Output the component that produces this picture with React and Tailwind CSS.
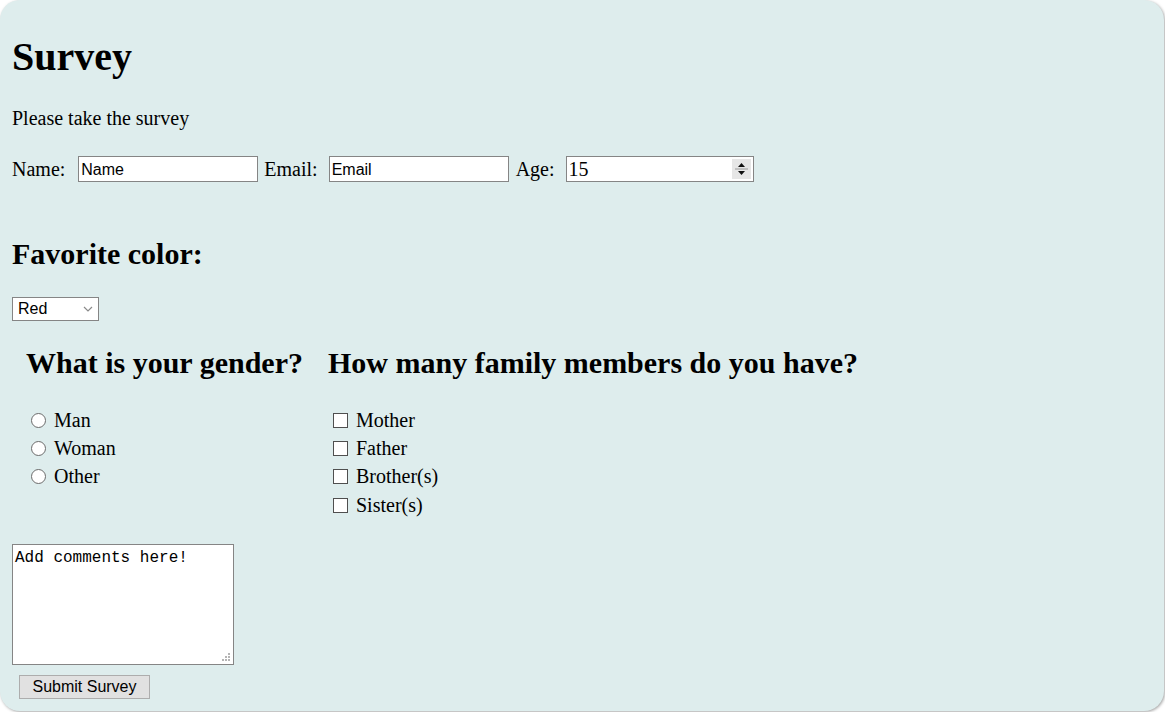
import React from "react";

const serif = "font-['Liberation_Serif','Times_New_Roman',serif]";
const sans = "font-['Liberation_Sans',Arial,sans-serif]";

const Radio = ({ label }) => (
    <div className="flex items-center h-[28.33px]">
        <span className="ml-[5px] w-[15px] h-[15px] rounded-full border-[1.5px] border-[#6b6b6b] bg-white" />
        <span className="ml-[8px]">{label}</span>
    </div>
);

const Check = ({ label }) => (
    <div className="flex items-center h-[28.33px]">
        <span className="ml-[5px] w-[15px] h-[15px] border-[1.5px] border-[#4f4f4f] bg-white" />
        <span className="ml-[8px]">{label}</span>
    </div>
);

const TextBox = ({ value, className = "" }) => (
    <input
        defaultValue={value}
        className={`h-[26px] border border-[#858585] bg-white px-[2px] pt-[2px] text-[16px] text-black outline-none ${sans} ${className}`}
    />
);

export default function App() {
    return (
        <div className="w-[1165px] h-[712px] bg-white overflow-hidden">
            <div className={`w-[1164px] h-[711px] rounded-[20px] bg-[#deeded] shadow-[1px_1px_3px_rgba(0,0,0,0.35)] pl-[12px] text-black ${serif}`}>
                <h1 className="pt-[34px] text-[40px] leading-[46px] font-bold">Survey</h1>
                <p className="mt-[27px] text-[20px] leading-[23px]">Please take the survey</p>

                <div className="mt-[26px] h-[26px] flex items-center text-[20px] leading-[23px]">
                    <span>Name:</span>
                    <TextBox value="Name" className="ml-[13px] w-[180px]" />
                    <span className="ml-[6px]">Email:</span>
                    <TextBox value="Email" className="ml-[11px] w-[180px]" />
                    <span className="ml-[7px]">Age:</span>
                    <div className="ml-[11px] w-[188px] h-[26px] border border-[#858585] bg-white flex items-center justify-between pl-[2px] pr-[2px]">
                        <span className="text-[20px] leading-[23px]">15</span>
                        <div className="w-[19px] h-[20px] bg-[#e6e6e6] flex flex-col items-center justify-center">
                            <svg width="19" height="20" viewBox="0 0 19 20">
                                <polygon points="6,8 13,8 9.5,4" fill="#111" />
                                <line x1="3" y1="10" x2="16" y2="10" stroke="#9a9a9a" strokeWidth="1" />
                                <polygon points="6,12 13,12 9.5,16" fill="#111" />
                            </svg>
                        </div>
                    </div>
                </div>

                <h2 className="mt-[55px] text-[30px] leading-[34px] font-bold">Favorite color:</h2>

                <div className={`mt-[26px] w-[87px] h-[24px] border border-[#858585] bg-white flex items-center justify-between pl-[5px] pr-[5px] text-[16px] ${sans}`}>
                    <span>Red</span>
                    <svg width="10" height="6" viewBox="0 0 10 6" fill="none">
                        <path d="M1 1 L5 5 L9 1" stroke="#8a8a8a" strokeWidth="1.2" />
                    </svg>
                </div>

                <div className="mt-[25px] flex text-[20px] leading-[23px]">
                    <div className="w-[302px] pl-[14px]">
                        <h2 className="text-[30px] leading-[34px] font-bold whitespace-nowrap">What is your gender?</h2>
                        <div className="mt-[26px]">
                            <Radio label="Man" />
                            <Radio label="Woman" />
                            <Radio label="Other" />
                        </div>
                    </div>
                    <div className="pl-[14px]">
                        <h2 className="text-[30px] leading-[34px] font-bold whitespace-nowrap">How many family members do you have?</h2>
                        <div className="mt-[26px]">
                            <Check label="Mother" />
                            <Check label="Father" />
                            <Check label="Brother(s)" />
                            <Check label="Sister(s)" />
                        </div>
                    </div>
                </div>

                <div className="relative mt-[25px] w-[222px] h-[121px]">
                    <textarea
                        defaultValue="Add comments here!"
                        className="block w-[222px] h-[121px] resize-none border border-[#858585] bg-white p-[2px] pt-[4px] text-[16px] leading-[19px] text-black outline-none font-['Liberation_Mono','Courier_New',monospace]"
                    />
                    <svg className="absolute right-[3px] bottom-[3px]" width="10" height="10" viewBox="0 0 10 10">
                        <rect x="7" y="1" width="2" height="2" fill="#b5b5b5" />
                        <rect x="4" y="4" width="2" height="2" fill="#b5b5b5" />
                        <rect x="7" y="4" width="2" height="2" fill="#b5b5b5" />
                        <rect x="1" y="7" width="2" height="2" fill="#b5b5b5" />
                        <rect x="4" y="7" width="2" height="2" fill="#b5b5b5" />
                        <rect x="7" y="7" width="2" height="2" fill="#b5b5b5" />
                    </svg>
                </div>

                <button className={`block mt-[10px] ml-[7px] w-[131px] h-[24px] bg-[#e1e1e1] border border-[#adadad] text-[16px] leading-[20px] text-black ${sans}`}>
                    Submit Survey
                </button>
            </div>
        </div>
    );
}
